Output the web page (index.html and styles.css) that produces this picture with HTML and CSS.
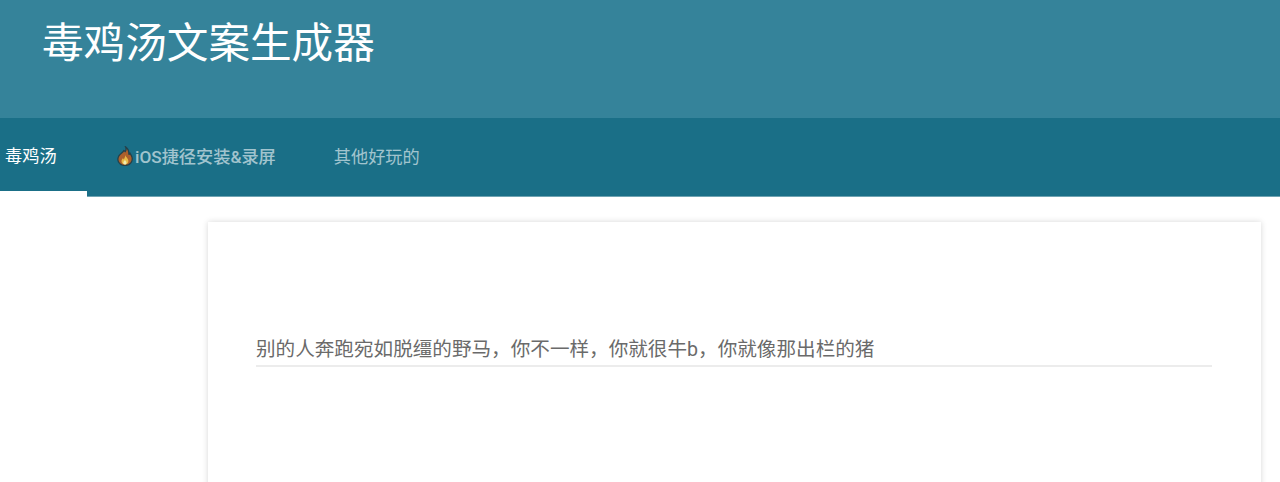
FILE: index.html
```html
<!DOCTYPE html>
<html lang="zh-CN">
<head>
  <meta charset="UTF-8">
  <meta name="viewport" content="width=device-width, initial-scale=1.0">
  <title>毒鸡汤文案生成器</title>
  <link rel="stylesheet" href="styles.css">
</head>
<body>
  <header class="header">
    <h1 class="title">毒鸡汤文案生成器</h1>
  </header>
  <nav class="tabs">
    <a class="tab active">毒鸡汤</a>
    <a class="tab tab-ios">
      <svg class="flame" viewBox="0 0 16 20">
        <path d="M8.500 .7C9.600 3 9 4.500 8.200 5.500 7.800 5 7.400 4.700 6.800 4.600 6.400 6.400 3.400 7.400 1.700 10.200 -.1 13.400 1 19.400 8 19.500 14 19.500 15.900 14.800 15 11.200 14.600 9.400 13.600 8.400 13 7.200 12.600 7.800 12.200 8.200 12 8.800 12 5.600 11.200 2.400 8.500 .7Z" fill="#ad602c" stroke="#24424c" stroke-width="1.300"/>
        <path d="M8.200 9C8.600 11 11.400 12.200 11.400 15 11.400 17.200 9.900 18.500 8 18.500 6 18.500 4.500 17.100 4.500 15.200 4.500 13.800 5.400 13 5.900 12.200 6.300 12.600 6.600 13 6.800 13.400 7.500 12.300 8.200 11 8.200 9Z" fill="#e9bb47"/>
        <path d="M7.900 13.800C8.500 14.900 9.500 15.500 9.500 16.700 9.500 17.700 8.800 18.500 7.900 18.500 7 18.500 6.300 17.700 6.300 16.800 6.300 15.800 7.400 15.100 7.900 13.800Z" fill="#f3ecb0"/>
      </svg>iOS捷径安装&amp;录屏
    </a>
    <a class="tab">其他好玩的</a>
  </nav>
  <main class="content">
    <section class="card">
      <div class="quote">别的人奔跑宛如脱缰的野马，你不一样，你就很牛b，你就像那出栏的猪</div>
    </section>
  </main>
</body>
</html>
```

FILE: styles.css
```css
* {
  box-sizing: border-box;
}
html,
body {
  height: 100%;
}
body {
  margin: 0;
  overflow: hidden;
  background-color: #fff;
  font-family: Roboto, "Noto Sans CJK SC", sans-serif;
}
.header {
  height: 118px;
  padding: 16px 0 0 42px;
  background-color: #35839a;
}
.title {
  margin: 0;
  font-size: 41.600px;
  line-height: 56px;
  font-weight: 400;
  color: #fff;
}
.tabs {
  display: flex;
  height: 79px;
  background-color: #1a6f87;
  border-bottom: 1px solid #6fa3b2;
}
.tab {
  display: flex;
  align-items: center;
  height: 78px;
  padding: 0 28px 3px 30px;
  font-size: 17.200px;
  color: rgba(255, 255, 255, .6);
}
.tab.active {
  width: 87px;
  height: 79px;
  padding: 0 0 0 5px;
  color: #fff;
  border-bottom: 6px solid #fff;
}
.tab-ios {
  font-weight: 500;
}
.flame {
  width: 16px;
  height: 20px;
  margin-right: 2px;
}
.content {
  padding: 25px 19px 0 208px;
}
.card {
  height: 400px;
  padding: 106px 49px 0 48px;
  background-color: #fff;
  box-shadow: 0 0 6px rgba(0, 0, 0, .16);
}
.quote {
  height: 40px;
  padding-top: 3px;
  margin-top: -1px;
  font-size: 19.600px;
  line-height: 39px;
  color: #6a6a6a;
  border-bottom: 2px solid #ececec;
}
```
